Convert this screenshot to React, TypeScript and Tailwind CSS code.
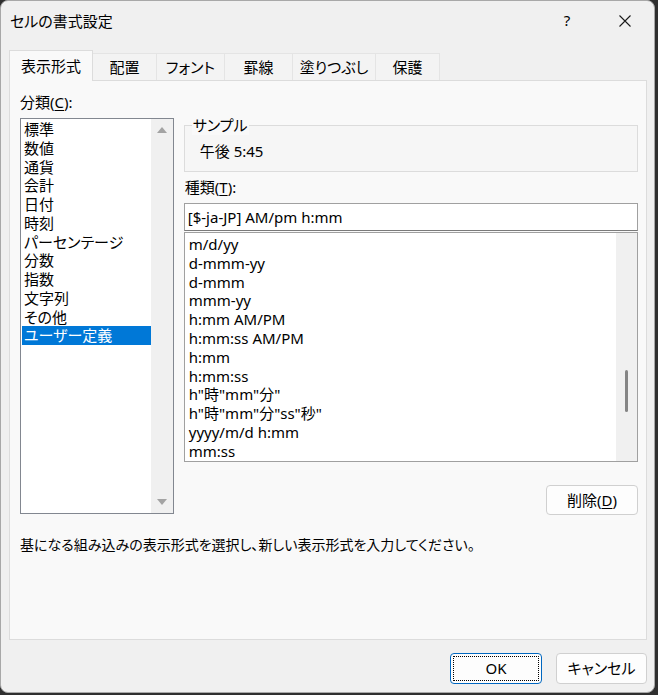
import * as React from "react";

const categories = [
  "標準",
  "数値",
  "通貨",
  "会計",
  "日付",
  "時刻",
  "パーセンテージ",
  "分数",
  "指数",
  "文字列",
  "その他",
  "ユーザー定義",
];

const formats = [
  "m/d/yy",
  "d-mmm-yy",
  "d-mmm",
  "mmm-yy",
  "h:mm AM/PM",
  "h:mm:ss AM/PM",
  "h:mm",
  "h:mm:ss",
  'h"時"mm"分"',
  'h"時"mm"分"ss"秒"',
  "yyyy/m/d h:mm",
  "mm:ss",
];

const tabs = ["表示形式", "配置", "フォント", "罫線", "塗りつぶし", "保護"];
const tabWidths = ["w-[84px]", "w-[64px]", "w-[68px]", "w-[68px]", "w-[83px]", "w-[64px]"];

function Underlined({ text, key1 }: { text: string; key1: string }) {
  return (
    <>
      {text}(<span className="underline underline-offset-2">{key1}</span>)
    </>
  );
}

function Triangle({ up }: { up?: boolean }) {
  return (
    <svg width="10" height="6" viewBox="0 0 10 6">
      <path d={up ? "M0 6 L5 0 L10 6 Z" : "M0 0 L5 6 L10 0 Z"} fill="#a3a3a3" />
    </svg>
  );
}

export default function App() {
  return (
    <div className="w-[658px] h-[695px] bg-[#2f2f2f] overflow-hidden [font-family:'Noto_Sans','Noto_Sans_CJK_JP',sans-serif] [font-feature-settings:'palt'] text-[15px] text-black">
      <div className="w-[655px] h-[693px] bg-[#f0f0f0] rounded-lg border border-[#a8a8a8] flex flex-col">
        {/* title bar */}
        <div className="h-[39px] flex items-center pl-[9px] shrink-0">
          <span className="leading-[20px] text-[15px]">セルの書式設定</span>
          <div className="flex-1" />
          <span className="w-[40px] text-center text-[15px] mr-[8px]">?</span>
          <div className="w-[59px] flex justify-center">
            <svg width="12" height="12" viewBox="0 0 12 12">
              <path d="M0.5 0.5 L11.5 11.5 M11.5 0.5 L0.5 11.5" stroke="#1a1a1a" strokeWidth="1.1" />
            </svg>
          </div>
        </div>

        {/* tabs */}
        <div className="flex items-end pl-[8px] h-[40px] shrink-0">
          {tabs.map((t, i) =>
            i === 0 ? (
              <div
                key={t}
                className={`${tabWidths[i]} h-[31px] relative z-10 -mb-px bg-[#f9f9f9] border border-b-0 border-[#dcdcdc] flex items-center justify-center leading-[19px]`}
              >
                {t}
              </div>
            ) : (
              <div
                key={t}
                className={`${tabWidths[i]} h-[27px] bg-[#f3f3f3] border border-l-0 border-b-0 border-[#e4e4e4] flex items-center justify-center leading-[19px]`}
              >
                {t}
              </div>
            ),
          )}
        </div>

        {/* panel */}
        <div className="mx-[8px] w-[638px] h-[560px] bg-[#f9f9f9] border border-[#dcdcdc] pt-[12px] pl-[10px] pr-[8px] shrink-0 flex flex-col">
          <div className="flex">
            {/* left column */}
            <div className="w-[154px] flex flex-col">
              <div className="leading-[19px] h-[19px]">
                <Underlined text="分類" key1="C" />:
              </div>
              <div className="mt-[6px] h-[396px] border border-[#828790] bg-white flex">
                <div className="flex-1 pt-[1px] pl-[1px]">
                  {categories.map((c) => (
                    <div
                      key={c}
                      className={`h-[18.75px] leading-[18.75px] pl-[2px] whitespace-nowrap ${
                        c === "ユーザー定義" ? "bg-[#0078d7] text-white" : ""
                      }`}
                    >
                      {c}
                    </div>
                  ))}
                </div>
                <div className="w-[22px] bg-[#f0f0f0] flex flex-col items-center justify-between py-[8px]">
                  <Triangle up />
                  <Triangle />
                </div>
              </div>
            </div>

            {/* right column */}
            <div className="ml-[10px] w-[455px] flex flex-col">
              <fieldset className="mt-[23px] h-[56px] border border-[#dcdcdc] bg-[#f6f6f6] px-[7px] pb-[6px]">
                <legend className="px-[1px] leading-[19px] bg-[#f9f9f9]">サンプル</legend>
                <div className="pl-[8px] pt-[7px] leading-[19px]">午後 5:45</div>
              </fieldset>
              <div className="mt-[6px] leading-[19px] pl-[1px]">
                <Underlined text="種類" key1="T" />:
              </div>
              <div className="mt-[6px] h-[28px] bg-white border border-[#a0a0a0] border-b-[#7a7a7a] flex items-center pl-[3px] leading-[19px]">
                [$-ja-JP] AM/pm h:mm
              </div>
              <div className="mt-[1px] h-[230px] bg-white border border-[#a0a0a0] flex">
                <div className="flex-1 pt-[2px] pl-[4px]">
                  {formats.map((f) => (
                    <div key={f} className="h-[18.8px] leading-[18.8px] whitespace-nowrap">
                      {f}
                    </div>
                  ))}
                </div>
                <div className="w-[21px] bg-[#f0f0f0] flex justify-center pt-[137px]">
                  <div className="w-[3px] h-[42px] rounded-full bg-[#858585]" />
                </div>
              </div>
              <div className="flex justify-end mt-[23px]">
                <button className="w-[92px] h-[30px] rounded-[4px] border border-[#d0d0d0] bg-[#fdfdfd] leading-[19px]">
                  <Underlined text="削除" key1="D" />
                </button>
              </div>
            </div>
          </div>
          <div className="mt-[20px] leading-[19px] text-[14px]">
            基になる組み込みの表示形式を選択し、新しい表示形式を入力してください。
          </div>
        </div>

        {/* buttons */}
        <div className="flex justify-end gap-[14px] pr-[7px] mt-[13px]">
          <button className="w-[92px] h-[31px] rounded-[4px] border border-[#0067c0] bg-[#fdfdfd] outline-1 outline-dotted outline-black outline-offset-[-4px] leading-[19px]">
            OK
          </button>
          <button className="w-[91px] h-[31px] rounded-[4px] border border-[#d0d0d0] bg-[#fdfdfd] leading-[19px]">
            キャンセル
          </button>
        </div>
      </div>
    </div>
  );
}
